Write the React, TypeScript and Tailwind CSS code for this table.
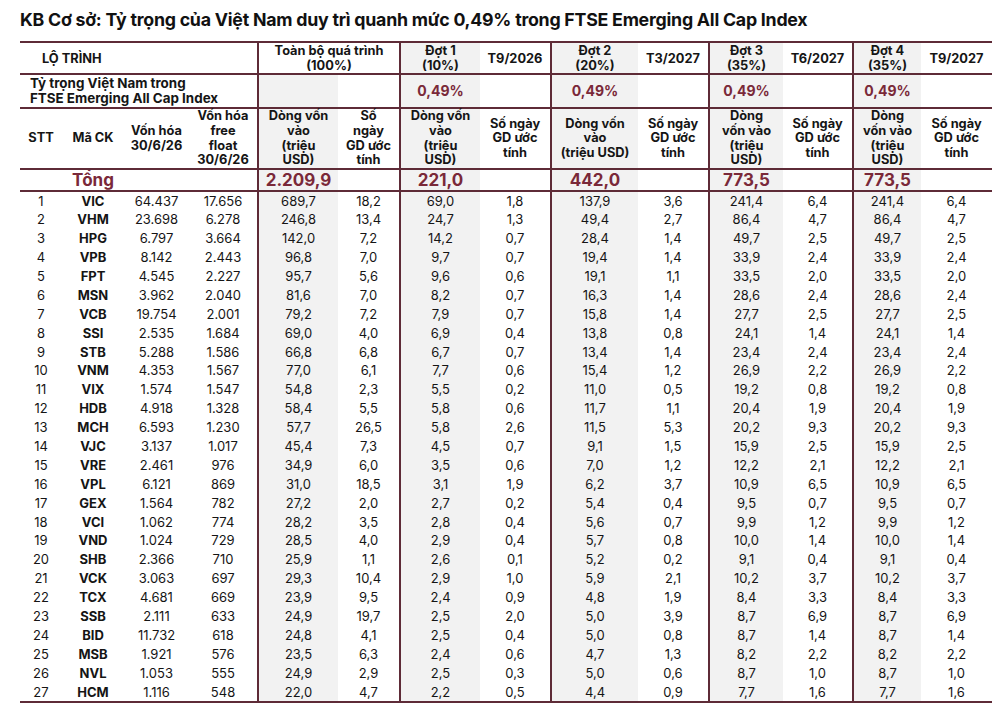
import React from 'react'

const rows: string[][] = [
  ['1', 'VIC', '64.437', '17.656', '689,7', '18,2', '69,0', '1,8', '137,9', '3,6', '241,4', '6,4', '241,4', '6,4'],
  ['2', 'VHM', '23.698', '6.278', '246,8', '13,4', '24,7', '1,3', '49,4', '2,7', '86,4', '4,7', '86,4', '4,7'],
  ['3', 'HPG', '6.797', '3.664', '142,0', '7,2', '14,2', '0,7', '28,4', '1,4', '49,7', '2,5', '49,7', '2,5'],
  ['4', 'VPB', '8.142', '2.443', '96,8', '7,0', '9,7', '0,7', '19,4', '1,4', '33,9', '2,4', '33,9', '2,4'],
  ['5', 'FPT', '4.545', '2.227', '95,7', '5,6', '9,6', '0,6', '19,1', '1,1', '33,5', '2,0', '33,5', '2,0'],
  ['6', 'MSN', '3.962', '2.040', '81,6', '7,0', '8,2', '0,7', '16,3', '1,4', '28,6', '2,4', '28,6', '2,4'],
  ['7', 'VCB', '19.754', '2.001', '79,2', '7,2', '7,9', '0,7', '15,8', '1,4', '27,7', '2,5', '27,7', '2,5'],
  ['8', 'SSI', '2.535', '1.684', '69,0', '4,0', '6,9', '0,4', '13,8', '0,8', '24,1', '1,4', '24,1', '1,4'],
  ['9', 'STB', '5.288', '1.586', '66,8', '6,8', '6,7', '0,7', '13,4', '1,4', '23,4', '2,4', '23,4', '2,4'],
  ['10', 'VNM', '4.353', '1.567', '77,0', '6,1', '7,7', '0,6', '15,4', '1,2', '26,9', '2,2', '26,9', '2,2'],
  ['11', 'VIX', '1.574', '1.547', '54,8', '2,3', '5,5', '0,2', '11,0', '0,5', '19,2', '0,8', '19,2', '0,8'],
  ['12', 'HDB', '4.918', '1.328', '58,4', '5,5', '5,8', '0,6', '11,7', '1,1', '20,4', '1,9', '20,4', '1,9'],
  ['13', 'MCH', '6.593', '1.230', '57,7', '26,5', '5,8', '2,6', '11,5', '5,3', '20,2', '9,3', '20,2', '9,3'],
  ['14', 'VJC', '3.137', '1.017', '45,4', '7,3', '4,5', '0,7', '9,1', '1,5', '15,9', '2,5', '15,9', '2,5'],
  ['15', 'VRE', '2.461', '976', '34,9', '6,0', '3,5', '0,6', '7,0', '1,2', '12,2', '2,1', '12,2', '2,1'],
  ['16', 'VPL', '6.121', '869', '31,0', '18,5', '3,1', '1,9', '6,2', '3,7', '10,9', '6,5', '10,9', '6,5'],
  ['17', 'GEX', '1.564', '782', '27,2', '2,0', '2,7', '0,2', '5,4', '0,4', '9,5', '0,7', '9,5', '0,7'],
  ['18', 'VCI', '1.062', '774', '28,2', '3,5', '2,8', '0,4', '5,6', '0,7', '9,9', '1,2', '9,9', '1,2'],
  ['19', 'VND', '1.024', '729', '28,5', '4,0', '2,9', '0,4', '5,7', '0,8', '10,0', '1,4', '10,0', '1,4'],
  ['20', 'SHB', '2.366', '710', '25,9', '1,1', '2,6', '0,1', '5,2', '0,2', '9,1', '0,4', '9,1', '0,4'],
  ['21', 'VCK', '3.063', '697', '29,3', '10,4', '2,9', '1,0', '5,9', '2,1', '10,2', '3,7', '10,2', '3,7'],
  ['22', 'TCX', '4.681', '669', '23,9', '9,5', '2,4', '0,9', '4,8', '1,9', '8,4', '3,3', '8,4', '3,3'],
  ['23', 'SSB', '2.111', '633', '24,9', '19,7', '2,5', '2,0', '5,0', '3,9', '8,7', '6,9', '8,7', '6,9'],
  ['24', 'BID', '11.732', '618', '24,8', '4,1', '2,5', '0,4', '5,0', '0,8', '8,7', '1,4', '8,7', '1,4'],
  ['25', 'MSB', '1.921', '576', '23,5', '6,3', '2,4', '0,6', '4,7', '1,3', '8,2', '2,2', '8,2', '2,2'],
  ['26', 'NVL', '1.053', '555', '24,9', '2,9', '2,5', '0,3', '5,0', '0,6', '8,7', '1,0', '8,7', '1,0'],
  ['27', 'HCM', '1.116', '548', '22,0', '4,7', '2,2', '0,5', '4,4', '0,9', '7,7', '1,6', '7,7', '1,6'],
]

const widths = [42, 62, 65, 69, 80, 62, 80, 71, 87, 71, 74, 70, 68, 71]

// first column of every group gets the dark left rule + grey fill
const groupStart = (i: number) => i === 4 || i === 6 || i === 8 || i === 10 || i === 12

const cellCls = (i: number) =>
  (groupStart(i) ? 'border-l-2 border-l-[#5e2b37] bg-[#f2f2f2] ' : '') + 'text-center align-middle p-0'

const rule = 'border-b-2 border-b-[#5e2b37]'

const Tong = ['', '', '', '', '2.209,9', '', '221,0', '', '442,0', '', '773,5', '', '773,5', '']

const Ngay = () => (
  <>
    Số ngày
    <br />
    GD ước
    <br />
    tính
  </>
)

const App = () => {
  return (
    <div className="w-[1000px] h-[721px] bg-white font-['Inter',sans-serif] text-[#151515] overflow-hidden">
      <h1 className="pl-[20px] pt-[7px] h-[41px] text-[17.8px] font-bold tracking-[-0.25px] text-[#111]">
        KB Cơ sở: Tỷ trọng của Việt Nam duy trì quanh mức 0,49% trong FTSE Emerging All Cap Index
      </h1>
      <div className="ml-[20px] w-[972px] border-b-2 border-b-[#5e2b37]">
        <table className="w-full table-fixed border-collapse border-t-2 border-t-[#5e2b37]">
          <colgroup>
            {widths.map((w, i) => (
              <col key={i} style={{ width: w }} />
            ))}
          </colgroup>
          <tbody>
            {/* lộ trình */}
            <tr className={`h-[31px] text-[12.8px] font-bold leading-[15px] ${rule}`}>
              <td colSpan={4} className="text-left pl-[22px] align-middle">LỘ TRÌNH</td>
              <td colSpan={2} className="border-l-2 border-l-[#5e2b37] text-center">
                Toàn bộ quá trình
                <br />
                (100%)
              </td>
              <td className={cellCls(6)}>Đợt 1<br />(10%)</td>
              <td className={cellCls(7)}>T9/2026</td>
              <td className={cellCls(8)}>Đợt 2<br />(20%)</td>
              <td className={cellCls(9)}>T3/2027</td>
              <td className={cellCls(10)}>Đợt 3<br />(35%)</td>
              <td className={cellCls(11)}>T6/2027</td>
              <td className={cellCls(12)}>Đợt 4<br />(35%)</td>
              <td className={cellCls(13)}>T9/2027</td>
            </tr>
            {/* tỷ trọng */}
            <tr className={`h-[34px] font-bold leading-[15.5px] ${rule}`}>
              <td colSpan={4} className="text-left pl-[10px] align-middle text-[13.4px]">
                Tỷ trọng Việt Nam trong
                <br />
                FTSE Emerging All Cap Index
              </td>
              {[4, 5, 6, 7, 8, 9, 10, 11, 12, 13].map((i) => (
                <td key={i} className={`${cellCls(i)} text-[14px] text-[#7a2939]`}>
                  {groupStart(i) && i !== 4 ? '0,49%' : ''}
                </td>
              ))}
            </tr>
            {/* column names */}
            <tr className={`h-[61px] text-[12.8px] font-bold leading-[14.6px] ${rule}`}>
              <td className={cellCls(0)}>STT</td>
              <td className={cellCls(1)}>Mã CK</td>
              <td className={cellCls(2)}>Vốn hóa<br />30/6/26</td>
              <td className={cellCls(3)}>Vốn hóa<br />free<br />float<br />30/6/26</td>
              <td className={cellCls(4)}>Dòng vốn<br />vào<br />(triệu<br />USD)</td>
              <td className={cellCls(5)}>Số<br />ngày<br />GD ước<br />tính</td>
              <td className={cellCls(6)}>Dòng vốn<br />vào<br />(triệu<br />USD)</td>
              <td className={cellCls(7)}><Ngay /></td>
              <td className={cellCls(8)}>Dòng vốn<br />vào<br />(triệu USD)</td>
              <td className={cellCls(9)}><Ngay /></td>
              <td className={cellCls(10)}>Dòng<br />vốn vào<br />(triệu<br />USD)</td>
              <td className={cellCls(11)}><Ngay /></td>
              <td className={cellCls(12)}>Dòng<br />vốn vào<br />(triệu<br />USD)</td>
              <td className={cellCls(13)}><Ngay /></td>
            </tr>
            {/* tổng */}
            <tr className={`h-[22px] text-[17px] font-bold leading-[20px] text-[#7a2939] ${rule}`}>
              {Tong.map((v, i) => (
                <td key={i} className={cellCls(i)}>
                  {i === 1 ? 'Tổng' : v}
                </td>
              ))}
            </tr>
            {rows.map((r) => (
              <tr key={r[0]} className="h-[18.9px] text-[13px] leading-[16px]">
                {r.map((v, i) => (
                  <td key={i} className={`${cellCls(i)} ${i === 1 ? 'font-bold' : ''}`}>
                    {v}
                  </td>
                ))}
              </tr>
            ))}
          </tbody>
        </table>
      </div>
    </div>
  )
}

export default App
